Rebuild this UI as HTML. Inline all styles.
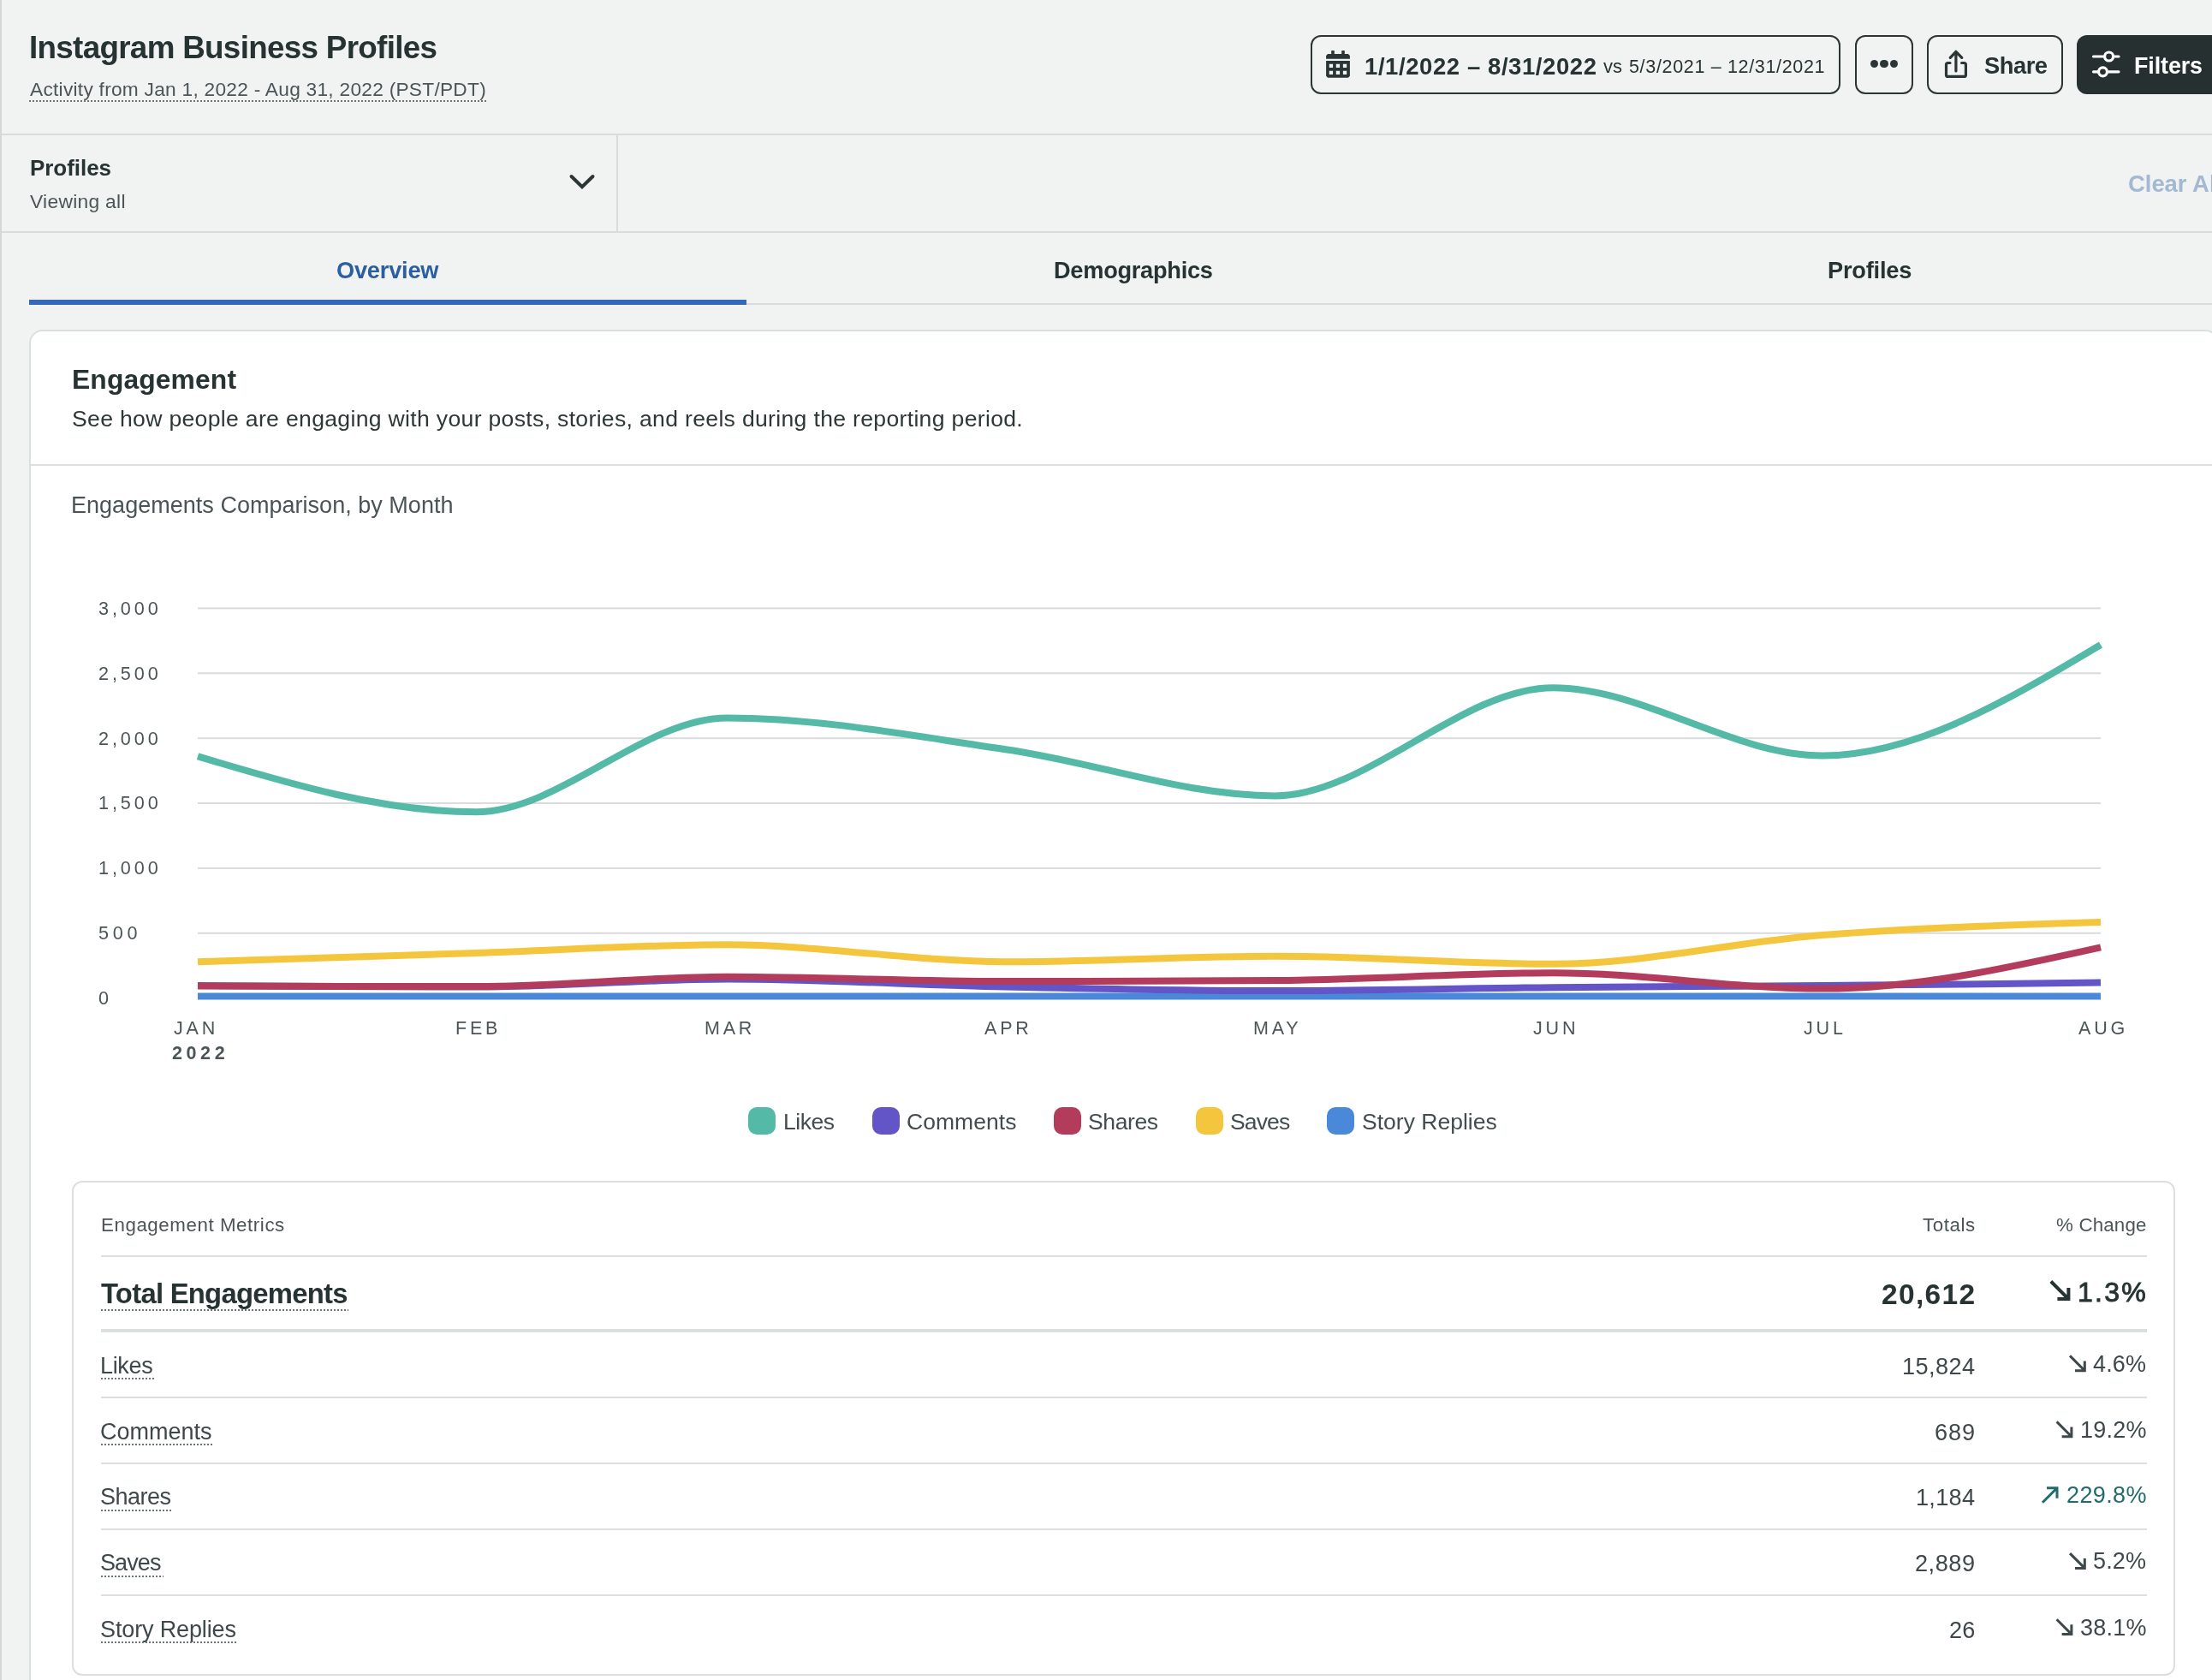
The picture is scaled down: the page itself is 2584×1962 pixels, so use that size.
<!DOCTYPE html>
<html><head><meta charset="utf-8"><style>
html,body{margin:0;padding:0;}
body{width:2584px;height:1962px;overflow:hidden;position:relative;background:#f1f2f2;font-family:"Liberation Sans",sans-serif;}
.t{position:absolute;white-space:nowrap;line-height:1;will-change:transform;}
.r{position:absolute;}
</style></head><body>
<div class="r" style="left:0px;top:0px;width:2px;height:1962px;background:#d4d7d9;"></div>
<div class="t" style="left:34.00px;top:37.75px;font-size:36.8px;color:#273333;font-weight:700;letter-spacing:-0.69px;">Instagram Business Profiles</div>
<div class="t" style="left:34.50px;top:93.28px;font-size:22.7px;color:#4b5557;letter-spacing:0.269px;">Activity from Jan 1, 2022 - Aug 31, 2022 (PST/PDT)</div>
<div class="r" style="left:34px;top:117px;width:535px;height:2px;background:repeating-linear-gradient(90deg,#6b7677 0 2px,transparent 2px 4px);"></div>
<div class="r" style="left:2px;top:156px;width:2582px;height:2px;background:#d9dcdd;"></div>
<div class="r" style="left:1531px;top:41px;width:619px;height:69px;border:2px solid #2c3535;border-radius:12px;box-sizing:border-box;"></div>
<svg class="r" style="left:1540px;top:50px" width="50" height="50" viewBox="0 0 50 50">
<path fill="#2c3535" d="M15.2 9.4 Q15.2 8.9 15.7 8.9 H18.3 Q18.8 8.9 18.8 9.4 V13.1 H27.2 V9.4 Q27.2 8.9 27.7 8.9 H30.3 Q30.8 8.9 30.8 9.4 V13.1 H34.9 L36.9 15.1 V18.75 H9.1 V15.1 L11.1 13.1 H15.2 Z"/>
<path fill="#2c3535" fill-rule="evenodd" d="M9.1 21.1 H36.9 V38.8 L34.9 40.8 H11.1 L9.1 38.8 Z M12.8 24.7 V29 H17.1 V24.7 Z M20.8 24.7 V29 H25.1 V24.7 Z M28.9 24.7 V29 H33.2 V24.7 Z M12.8 32.7 V37 H17.1 V32.7 Z M20.8 32.7 V37 H25.1 V32.7 Z M28.9 32.7 V37 H33.2 V32.7 Z"/>
</svg>
<div class="t" style="left:1593.50px;top:63.62px;font-size:27.5px;color:#273333;font-weight:700;letter-spacing:0.581px;">1/1/2022 – 8/31/2022</div>
<div class="t" style="left:1872.50px;top:67.28px;font-size:22px;color:#273333;">vs</div>
<div class="t" style="left:1902.50px;top:67.70px;font-size:21.5px;color:#273333;letter-spacing:0.665px;">5/3/2021 – 12/31/2021</div>
<div class="r" style="left:2167px;top:41px;width:68px;height:69px;border:2px solid #2c3535;border-radius:12px;box-sizing:border-box;"></div>
<div class="r" style="left:2185.0px;top:69.8px;width:9.4px;height:9.4px;border-radius:50%;background:#2c3535"></div>
<div class="r" style="left:2196.4px;top:69.8px;width:9.4px;height:9.4px;border-radius:50%;background:#2c3535"></div>
<div class="r" style="left:2207.8px;top:69.8px;width:9.4px;height:9.4px;border-radius:50%;background:#2c3535"></div>
<div class="r" style="left:2251px;top:41px;width:159px;height:69px;border:2px solid #2c3535;border-radius:12px;box-sizing:border-box;"></div>
<svg class="r" style="left:2265px;top:50px" width="40" height="50" viewBox="0 0 40 50">
<g fill="none" stroke="#2c3535" stroke-width="3.2" stroke-linecap="round" stroke-linejoin="round">
<path d="M19.9 33 V10.5 M13.3 17.4 L19.9 10.3 L26.7 17.4"/>
<path d="M13 23.5 H10.5 Q8.5 23.5 8.5 25.5 V37.4 Q8.5 39.4 10.5 39.4 H29.4 Q31.4 39.4 31.4 37.4 V25.5 Q31.4 23.5 29.4 23.5 H26.6"/>
</g></svg>
<div class="t" style="left:2317.50px;top:63.29px;font-size:27.3px;color:#273333;font-weight:700;letter-spacing:-0.469px;">Share</div>
<div class="r" style="left:2426px;top:41px;width:200px;height:69px;background:#263030;border-radius:12px;"></div>
<svg class="r" style="left:2440px;top:54px" width="40" height="40" viewBox="0 0 40 40">
<g fill="none" stroke="#fff" stroke-width="3.2" stroke-linecap="round">
<path d="M5.5 12 H18.6 M28.6 12 H35"/><circle cx="23.6" cy="12" r="5"/>
<path d="M5.5 29.8 H11.5 M21.5 29.8 H35"/><circle cx="16.5" cy="29.8" r="5"/>
</g></svg>
<div class="t" style="left:2493.00px;top:63.71px;font-size:26.8px;color:#ffffff;font-weight:700;letter-spacing:-0.071px;">Filters</div>
<div class="t" style="left:34.50px;top:183.09px;font-size:26px;color:#273333;font-weight:700;letter-spacing:-0.053px;">Profiles</div>
<div class="t" style="left:34.50px;top:224.10px;font-size:22.8px;color:#4b5557;letter-spacing:0.292px;">Viewing all</div>
<svg class="r" style="left:660px;top:198px" width="40" height="30" viewBox="0 0 40 30">
<path d="M7.5 8 L20 20.3 L32.5 8" fill="none" stroke="#2c3535" stroke-width="4" stroke-linecap="round" stroke-linejoin="miter"/></svg>
<div class="r" style="left:720px;top:158px;width:2px;height:112px;background:#d9dcdd;"></div>
<div class="t" style="left:2486.00px;top:201.11px;font-size:27.4px;color:#a3b8d3;font-weight:700;">Clear All</div>
<div class="r" style="left:2px;top:270px;width:2582px;height:2px;background:#d9dcdd;"></div>
<div class="t" style="left:393.00px;top:301.68px;font-size:27.2px;color:#2c5f9f;font-weight:700;letter-spacing:-0.209px;">Overview</div>
<div class="t" style="left:1230.50px;top:301.68px;font-size:27.2px;color:#273333;font-weight:700;letter-spacing:-0.267px;">Demographics</div>
<div class="t" style="left:2134.75px;top:301.68px;font-size:27.2px;color:#273333;font-weight:700;letter-spacing:-0.21px;">Profiles</div>
<div class="r" style="left:34px;top:354px;width:2550px;height:2px;background:#d9dcdd;"></div>
<div class="r" style="left:34px;top:350px;width:838px;height:6px;background:#3469b9;"></div>
<div class="r" style="left:34px;top:385px;width:2558px;height:1700px;background:#fff;border:2px solid #dcdfe0;border-radius:16px;box-sizing:border-box;"></div>
<div class="t" style="left:84.00px;top:428.38px;font-size:31.8px;color:#273333;font-weight:700;letter-spacing:0.129px;">Engagement</div>
<div class="t" style="left:83.70px;top:475.78px;font-size:26.6px;color:#2e3737;letter-spacing:0.314px;">See how people are engaging with your posts, stories, and reels during the reporting period.</div>
<div class="r" style="left:36px;top:542px;width:2554px;height:2px;background:#dcdfe0;"></div>
<div class="t" style="left:83.00px;top:577.04px;font-size:27px;color:#4a5456;letter-spacing:0.024px;">Engagements Comparison, by Month</div>
<svg class="r" style="left:0;top:0" width="2584" height="1962">
<rect x="231" y="1164.65" width="2223" height="2" fill="#d9dbdd"/>
<rect x="231" y="1088.78" width="2223" height="2" fill="#d9dbdd"/>
<rect x="231" y="1012.90" width="2223" height="2" fill="#d9dbdd"/>
<rect x="231" y="937.03" width="2223" height="2" fill="#d9dbdd"/>
<rect x="231" y="861.15" width="2223" height="2" fill="#d9dbdd"/>
<rect x="231" y="785.28" width="2223" height="2" fill="#d9dbdd"/>
<rect x="231" y="709.40" width="2223" height="2" fill="#d9dbdd"/>
<path d="M231.0 1123.2 C339.4 1119.8 447.7 1116.5 556.1 1113.0 C654.0 1109.8 751.8 1103.3 849.7 1103.3 C958.0 1103.3 1066.4 1123.2 1174.7 1123.2 C1279.6 1123.2 1384.4 1116.7 1489.3 1116.7 C1597.7 1116.7 1706.0 1125.8 1814.4 1125.8 C1919.3 1125.8 2024.1 1100.2 2129.0 1092.1 C2237.3 1083.7 2345.7 1080.4 2454.0 1077.1" fill="none" stroke="#f4c63e" stroke-width="8" stroke-linejoin="round"/>
<path d="M231.0 1163.6 C339.4 1163.6 447.7 1163.6 556.1 1163.6 C654.0 1163.6 751.8 1163.6 849.7 1163.6 C958.0 1163.6 1066.4 1163.6 1174.7 1163.6 C1279.6 1163.6 1384.4 1163.6 1489.3 1163.6 C1597.7 1163.6 1706.0 1163.6 1814.4 1163.6 C1919.3 1163.6 2024.1 1163.6 2129.0 1163.6 C2237.3 1163.6 2345.7 1163.6 2454.0 1163.6" fill="none" stroke="#4a89d9" stroke-width="8" stroke-linejoin="round"/>
<path d="M231.0 1151.0 C339.4 1151.8 447.7 1152.6 556.1 1152.6 C654.0 1152.6 751.8 1143.6 849.7 1143.6 C958.0 1143.6 1066.4 1150.2 1174.7 1152.5 C1279.6 1154.7 1384.4 1157.1 1489.3 1157.1 C1597.7 1157.1 1706.0 1154.2 1814.4 1153.2 C1919.3 1152.2 2024.1 1152.0 2129.0 1151.1 C2237.3 1150.1 2345.7 1148.8 2454.0 1147.5" fill="none" stroke="#6354c8" stroke-width="8" stroke-linejoin="round"/>
<path d="M231.0 1151.4 C339.4 1151.8 447.7 1152.1 556.1 1152.1 C654.0 1152.1 751.8 1140.7 849.7 1140.7 C958.0 1140.7 1066.4 1146.1 1174.7 1146.1 C1279.6 1146.1 1384.4 1145.7 1489.3 1145.0 C1597.7 1144.2 1706.0 1136.2 1814.4 1136.2 C1919.3 1136.2 2024.1 1154.6 2129.0 1154.6 C2237.3 1154.6 2345.7 1130.5 2454.0 1106.4" fill="none" stroke="#b33b5b" stroke-width="8" stroke-linejoin="round"/>
<path d="M231.0 883.3 C339.4 915.8 447.7 948.3 556.1 948.3 C654.0 948.3 751.8 838.4 849.7 838.4 C958.0 838.4 1066.4 859.7 1174.7 875.2 C1279.6 890.2 1384.4 929.4 1489.3 929.4 C1597.7 929.4 1706.0 803.3 1814.4 803.3 C1919.3 803.3 2024.1 882.4 2129.0 882.4 C2237.3 882.4 2345.7 817.7 2454.0 753.0" fill="none" stroke="#54b9a6" stroke-width="8" stroke-linejoin="round"/>
</svg>
<div class="t" style="left:114.50px;top:699.82px;font-size:21.6px;color:#4b5557;letter-spacing:3.912px;">3,000</div>
<div class="t" style="left:114.50px;top:775.69px;font-size:21.6px;color:#4b5557;letter-spacing:3.912px;">2,500</div>
<div class="t" style="left:114.50px;top:851.57px;font-size:21.6px;color:#4b5557;letter-spacing:3.912px;">2,000</div>
<div class="t" style="left:114.50px;top:927.44px;font-size:21.6px;color:#4b5557;letter-spacing:3.912px;">1,500</div>
<div class="t" style="left:114.50px;top:1003.32px;font-size:21.6px;color:#4b5557;letter-spacing:3.912px;">1,000</div>
<div class="t" style="left:114.50px;top:1079.19px;font-size:21.6px;color:#4b5557;letter-spacing:4.68px;">500</div>
<div class="t" style="left:114.50px;top:1155.07px;font-size:21.6px;color:#4b5557;">0</div>
<div class="t" style="left:203.09px;top:1191.10px;font-size:21.5px;color:#4b5557;letter-spacing:3.8px;">JAN</div>
<div class="t" style="left:532.19px;top:1191.10px;font-size:21.5px;color:#4b5557;letter-spacing:3.8px;">FEB</div>
<div class="t" style="left:822.81px;top:1191.10px;font-size:21.5px;color:#4b5557;letter-spacing:3.8px;">MAR</div>
<div class="t" style="left:1149.60px;top:1191.10px;font-size:21.5px;color:#4b5557;letter-spacing:3.8px;">APR</div>
<div class="t" style="left:1463.80px;top:1191.10px;font-size:21.5px;color:#4b5557;letter-spacing:3.8px;">MAY</div>
<div class="t" style="left:1790.50px;top:1191.10px;font-size:21.5px;color:#4b5557;letter-spacing:3.8px;">JUN</div>
<div class="t" style="left:2106.88px;top:1191.10px;font-size:21.5px;color:#4b5557;letter-spacing:3.8px;">JUL</div>
<div class="t" style="left:2427.70px;top:1191.10px;font-size:21.5px;color:#4b5557;letter-spacing:3.8px;">AUG</div>
<div class="t" style="left:201.08px;top:1220.30px;font-size:21.5px;color:#4b5557;font-weight:700;letter-spacing:4.6px;">2022</div>
<div class="r" style="left:874.1px;top:1293px;width:32px;height:32px;background:#54b9a6;border-radius:10px;"></div>
<div class="t" style="left:915.10px;top:1296.77px;font-size:26.5px;color:#424c4e;letter-spacing:-0.466px;">Likes</div>
<div class="r" style="left:1019.1px;top:1293px;width:32px;height:32px;background:#6354c8;border-radius:10px;"></div>
<div class="t" style="left:1059.20px;top:1296.77px;font-size:26.5px;color:#424c4e;letter-spacing:0.04px;">Comments</div>
<div class="r" style="left:1231px;top:1293px;width:32px;height:32px;background:#b33b5b;border-radius:10px;"></div>
<div class="t" style="left:1271.10px;top:1296.77px;font-size:26.5px;color:#424c4e;letter-spacing:-0.394px;">Shares</div>
<div class="r" style="left:1397.2px;top:1293px;width:32px;height:32px;background:#f4c63e;border-radius:10px;"></div>
<div class="t" style="left:1436.80px;top:1296.77px;font-size:26.5px;color:#424c4e;letter-spacing:-0.863px;">Saves</div>
<div class="r" style="left:1550.2px;top:1293px;width:32px;height:32px;background:#4a89d9;border-radius:10px;"></div>
<div class="t" style="left:1590.60px;top:1296.77px;font-size:26.5px;color:#424c4e;letter-spacing:0.009px;">Story Replies</div>
<div class="r" style="left:84px;top:1379px;width:2457px;height:578px;border:2px solid #dcdfe0;border-radius:12px;box-sizing:border-box;"></div>
<div class="t" style="left:117.80px;top:1420.42px;font-size:22.3px;color:#4b5557;letter-spacing:0.575px;">Engagement Metrics</div>
<div class="t" style="left:2245.80px;top:1420.22px;font-size:22.3px;color:#4b5557;letter-spacing:0.589px;">Totals</div>
<div class="t" style="left:2402.00px;top:1420.22px;font-size:22.3px;color:#4b5557;letter-spacing:0.18px;">% Change</div>
<div class="r" style="left:118px;top:1466px;width:2390px;height:2px;background:#dcdfe0;"></div>
<div class="t" style="left:118.00px;top:1494.83px;font-size:32.8px;color:#273333;font-weight:700;letter-spacing:-0.726px;">Total Engagements</div>
<div class="r" style="left:118px;top:1529px;width:289px;height:2px;background:repeating-linear-gradient(90deg,#6b7677 0 2px,transparent 2px 4px);"></div>
<div class="t" style="left:2197.80px;top:1494.94px;font-size:33.5px;color:#273333;font-weight:700;letter-spacing:1.347px;">20,612</div>
<div class="t" style="left:2427.40px;top:1493.21px;font-size:32px;color:#273333;letter-spacing:2.221px;-webkit-text-stroke:0.9px #273333;">1.3%</div>
<svg class="r" style="left:0;top:0;overflow:visible" width="1" height="1"><path d="M2395.80 1496.50 L2416.40 1517.10 M2403.40 1517.10 H2416.40 V1504.10" fill="none" stroke="#273333" stroke-width="4" stroke-linecap="butt" stroke-linejoin="miter"/></svg>
<div class="r" style="left:118px;top:1552px;width:2390px;height:4px;background:#dcdfe0;"></div>
<div class="t" style="left:116.50px;top:1581.74px;font-size:27px;color:#3e484a;letter-spacing:-0.333px;">Likes</div>
<div class="r" style="left:118px;top:1609.1px;width:62.7px;height:2px;background:repeating-linear-gradient(90deg,#6b7677 0 2px,transparent 2px 4px);"></div>
<div class="t" style="left:2221.80px;top:1581.66px;font-size:27.1px;color:#3e484a;letter-spacing:0.462px;">15,824</div>
<div class="t" style="left:2445.00px;top:1579.64px;font-size:27px;color:#3e484a;letter-spacing:0.153px;">4.6%</div>
<svg class="r" style="left:0;top:0;overflow:visible" width="1" height="1"><path d="M2418.00 1583.40 L2435.30 1600.70 M2424.00 1600.70 H2435.30 V1589.40" fill="none" stroke="#3e484a" stroke-width="3" stroke-linecap="butt" stroke-linejoin="miter"/></svg>
<div class="r" style="left:118px;top:1631px;width:2390px;height:2px;background:#dcdfe0;"></div>
<div class="t" style="left:116.50px;top:1658.74px;font-size:27px;color:#3e484a;letter-spacing:-0.005px;">Comments</div>
<div class="r" style="left:118px;top:1686.1px;width:131.5px;height:2px;background:repeating-linear-gradient(90deg,#6b7677 0 2px,transparent 2px 4px);"></div>
<div class="t" style="left:2260.00px;top:1658.66px;font-size:27.1px;color:#3e484a;letter-spacing:0.892px;">689</div>
<div class="t" style="left:2429.60px;top:1656.64px;font-size:27px;color:#3e484a;letter-spacing:0.211px;">19.2%</div>
<svg class="r" style="left:0;top:0;overflow:visible" width="1" height="1"><path d="M2402.60 1660.40 L2419.90 1677.70 M2408.60 1677.70 H2419.90 V1666.40" fill="none" stroke="#3e484a" stroke-width="3" stroke-linecap="butt" stroke-linejoin="miter"/></svg>
<div class="r" style="left:118px;top:1708px;width:2390px;height:2px;background:#dcdfe0;"></div>
<div class="t" style="left:116.50px;top:1735.24px;font-size:27px;color:#3e484a;letter-spacing:-0.51px;">Shares</div>
<div class="r" style="left:118px;top:1762.6px;width:84px;height:2px;background:repeating-linear-gradient(90deg,#6b7677 0 2px,transparent 2px 4px);"></div>
<div class="t" style="left:2238.00px;top:1735.16px;font-size:27.1px;color:#3e484a;letter-spacing:0.296px;">1,184</div>
<div class="t" style="left:2413.50px;top:1733.14px;font-size:27px;color:#226b6b;letter-spacing:0.385px;">229.8%</div>
<svg class="r" style="left:0;top:0;overflow:visible" width="1" height="1"><path d="M2386.00 1754.70 L2403.00 1737.70 M2391.00 1737.70 H2403.00 V1749.70" fill="none" stroke="#226b6b" stroke-width="3" stroke-linecap="butt" stroke-linejoin="miter"/></svg>
<div class="r" style="left:118px;top:1785px;width:2390px;height:2px;background:#dcdfe0;"></div>
<div class="t" style="left:116.50px;top:1812.44px;font-size:27px;color:#3e484a;letter-spacing:-0.886px;">Saves</div>
<div class="r" style="left:118px;top:1839.8px;width:72.5px;height:2px;background:repeating-linear-gradient(90deg,#6b7677 0 2px,transparent 2px 4px);"></div>
<div class="t" style="left:2237.00px;top:1812.36px;font-size:27.1px;color:#3e484a;letter-spacing:0.546px;">2,889</div>
<div class="t" style="left:2445.00px;top:1810.34px;font-size:27px;color:#3e484a;letter-spacing:0.153px;">5.2%</div>
<svg class="r" style="left:0;top:0;overflow:visible" width="1" height="1"><path d="M2418.00 1814.10 L2435.30 1831.40 M2424.00 1831.40 H2435.30 V1820.10" fill="none" stroke="#3e484a" stroke-width="3" stroke-linecap="butt" stroke-linejoin="miter"/></svg>
<div class="r" style="left:118px;top:1862px;width:2390px;height:2px;background:#dcdfe0;"></div>
<div class="t" style="left:116.50px;top:1889.64px;font-size:27px;color:#3e484a;letter-spacing:-0.131px;">Story Replies</div>
<div class="r" style="left:118px;top:1917.0px;width:160px;height:2px;background:repeating-linear-gradient(90deg,#6b7677 0 2px,transparent 2px 4px);"></div>
<div class="t" style="left:2276.60px;top:1889.56px;font-size:27.1px;color:#3e484a;letter-spacing:0.255px;">26</div>
<div class="t" style="left:2429.60px;top:1887.54px;font-size:27px;color:#3e484a;letter-spacing:0.211px;">38.1%</div>
<svg class="r" style="left:0;top:0;overflow:visible" width="1" height="1"><path d="M2402.60 1891.30 L2419.90 1908.60 M2408.60 1908.60 H2419.90 V1897.30" fill="none" stroke="#3e484a" stroke-width="3" stroke-linecap="butt" stroke-linejoin="miter"/></svg>
</body></html>
